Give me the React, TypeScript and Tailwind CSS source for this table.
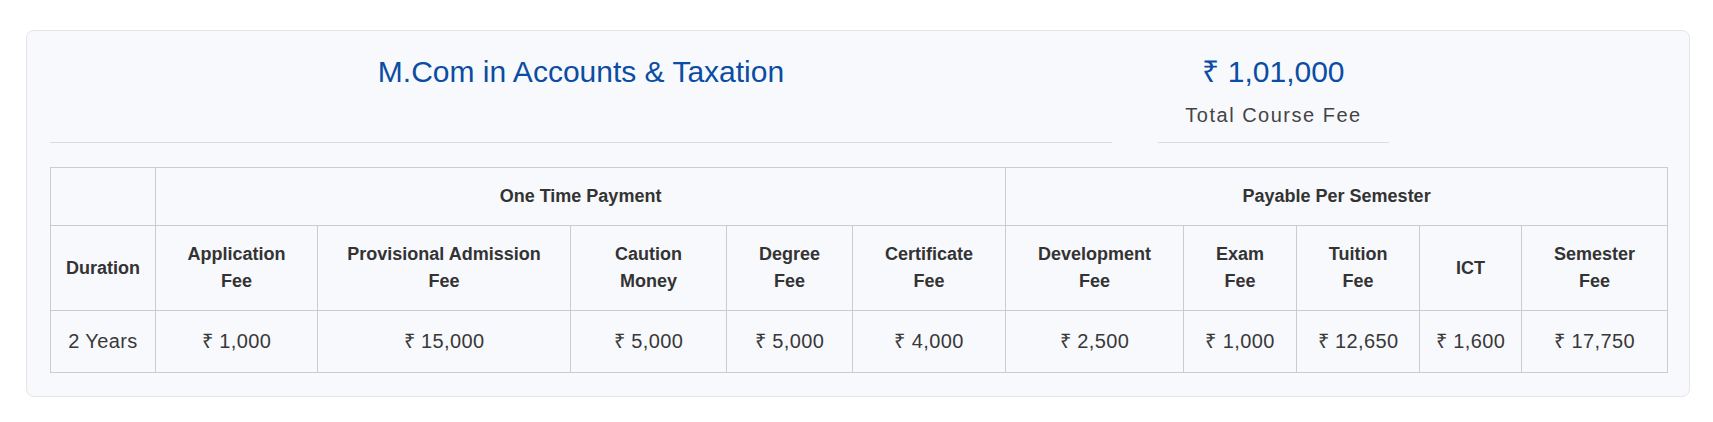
const oneTime = [
  { label: ["Application", "Fee"], amount: "₹ 1,000", w: "w-[162px]" },
  { label: ["Provisional Admission", "Fee"], amount: "₹ 15,000", w: "w-[253px]" },
  { label: ["Caution", "Money"], amount: "₹ 5,000", w: "w-[156px]" },
  { label: ["Degree", "Fee"], amount: "₹ 5,000", w: "w-[126px]" },
  { label: ["Certificate", "Fee"], amount: "₹ 4,000", w: "w-[153px]" },
];

const perSemester = [
  { label: ["Development", "Fee"], amount: "₹ 2,500", w: "w-[178px]" },
  { label: ["Exam", "Fee"], amount: "₹ 1,000", w: "w-[113px]" },
  { label: ["Tuition", "Fee"], amount: "₹ 12,650", w: "w-[123px]" },
  { label: ["ICT"], amount: "₹ 1,600", w: "w-[102px]" },
  { label: ["Semester", "Fee"], amount: "₹ 17,750", w: "w-[146px]" },
];

const columns = [...oneTime, ...perSemester];

const th = "border border-[#cccccc] px-2 py-[15px] text-center align-middle text-[18px] font-bold leading-[27px] text-[#333333]";
const td = "border border-[#cccccc] px-2 py-[15px] text-center align-middle text-[20px] leading-[31px] tracking-[0.4px] text-[#383838]";

export default function App() {
  return (
    <div className="min-h-screen bg-white pl-[26px] pt-[30px] font-['Liberation_Sans',Arial,sans-serif]">
      <div className="w-[1664px] rounded-lg border border-[#e5e5e5] bg-[#f8f9fd] px-[23px] pb-[23px] pt-[23px]">
        <div className="flex">
          <div className="w-[1062px] border-b border-[#dddddd] text-center">
            <h2 className="text-[30px] leading-[36px] text-[#0a4da2]">M.Com in Accounts &amp; Taxation</h2>
          </div>
          <div className="ml-[46px] w-[231px] border-b border-[#dddddd] pb-[12px] text-center">
            <div className="text-[30px] leading-[36px] text-[#0a4da2]">₹ 1,01,000</div>
            <div className="mt-[10px] text-[20px] leading-[30px] tracking-[1.5px] text-[#444444]">Total Course Fee</div>
          </div>
        </div>

        <table className="mt-[24px] w-[1617px] table-fixed border-collapse">
          <colgroup>
            <col className="w-[105px]" />
            {columns.map((c, i) => (
              <col key={i} className={c.w} />
            ))}
          </colgroup>
          <thead>
            <tr>
              <th className={th}></th>
              <th className={th} colSpan={5}>
                One Time Payment
              </th>
              <th className={th} colSpan={5}>
                Payable Per Semester
              </th>
            </tr>
            <tr>
              <th className={th}>Duration</th>
              {columns.map((c, i) => (
                <th key={i} className={th}>
                  {c.label.map((line, j) => (
                    <div key={j}>{line}</div>
                  ))}
                </th>
              ))}
            </tr>
          </thead>
          <tbody>
            <tr>
              <td className={td}>2 Years</td>
              {columns.map((c, i) => (
                <td key={i} className={td}>
                  {c.amount}
                </td>
              ))}
            </tr>
          </tbody>
        </table>
      </div>
    </div>
  );
}
